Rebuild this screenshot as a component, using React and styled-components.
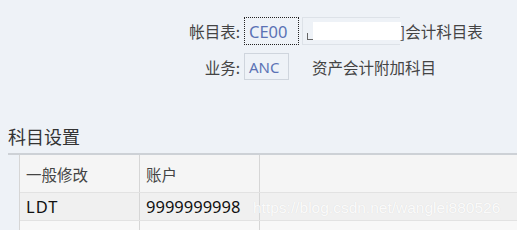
import React from "react";
import styled, { createGlobalStyle } from "styled-components";

const GlobalStyle = createGlobalStyle`
	html, body {
		margin: 0;
		padding: 0;
		background: #eef2f7;
		font-family: "Noto Sans", "Noto Sans CJK SC", sans-serif;
	}
`;

const Page = styled.div`
	position: relative;
	width: 517px;
	height: 230px;
	overflow: hidden;
	background: #eef2f7;
	color: #333;
`;

const Form = styled.div`
	display: grid;
	grid-template-columns: 64px auto;
	column-gap: 4px;
	row-gap: 8px;
	padding: 17px 0 0 176px;
	align-items: center;
`;

const Label = styled.div`
	text-align: right;
	font-size: 15.5px;
	color: #444;
	font-family: "Noto Sans CJK SC", sans-serif;
`;

const Line = styled.div`
	display: flex;
	align-items: center;
`;

const Field = styled.div`
	box-sizing: border-box;
	width: ${p => p.width}px;
	height: ${p => p.height}px;
	display: flex;
	align-items: center;
	padding-left: 4px;
	background: #eef2f7;
	border: ${p => (p.focused ? "1px dotted #222" : "1px solid #cfd5dd")};
	color: #5b72b5;
	font-size: ${p => p.size}px;
`;

const NameBox = styled.div`
	position: relative;
	box-sizing: border-box;
	width: 98px;
	height: 28px;
	margin-left: 3px;
	border: 1px solid #dde2e8;
	border-right: none;
	background: #eef2f7;

	&::before {
		content: "";
		position: absolute;
		left: 4px;
		top: 15px;
		width: 5px;
		height: 6px;
		border-left: 1px solid #666;
		border-bottom: 1px solid #666;
	}

	&::after {
		content: "";
		position: absolute;
		left: 0;
		top: 4px;
		width: 98px;
		height: 18px;
		background: #fff;
		clip-path: inset(0 0 0 10px);
	}
`;

const Desc = styled.span`
	font-size: 15.5px;
	color: #444;
	font-family: "Noto Sans CJK SC", sans-serif;
	margin-left: ${p => p.gap || 0}px;
`;

const Title = styled.div`
	margin: 44px 0 0 8px;
	height: 29px;
	font-size: 18px;
	color: #333;
	font-family: "Noto Sans CJK SC", sans-serif;
	line-height: 24px;
`;

const Section = styled.div`
	margin-left: 8px;
	border-top: 2px solid #cdd1d6;
	padding-left: 11px;
`;

const Table = styled.div`
	background: #f8f8f8;
	border-left: 1px solid #d6d6d6;
`;

const Row = styled.div`
	display: grid;
	grid-template-columns: 120px 120px 1fr;
	height: ${p => p.height}px;
	background: ${p => p.bg};
	border-bottom: 1px solid #e2e2e2;
`;

const Cell = styled.div`
	display: flex;
	align-items: center;
	padding-left: 6px;
	border-right: ${p => (p.last ? "none" : "1px solid #d6d6d6")};
	font-size: ${p => (p.head ? "15.5px" : "16.5px")};
	color: ${p => (p.head ? "#444" : "#111")};
	font-family: ${p =>
		p.head ? '"Noto Sans CJK SC", sans-serif' : '"Noto Sans", "Noto Sans CJK SC", sans-serif'};
	letter-spacing: ${p => (p.wide ? "1px" : "0")};
`;

const Watermark = styled.div`
	position: absolute;
	left: 253px;
	top: 199px;
	font-family: "Liberation Sans", sans-serif;
	font-size: 15.5px;
	color: rgba(255, 255, 255, 0.9);
	text-shadow: 0 0 1px rgba(0, 0, 0, 0.1);
`;

export default function App() {
	return (
		<Page>
			<GlobalStyle />
			<Form>
				<Label>帐目表:</Label>
				<Line>
					<Field width={55} height={28} size={16.5} focused>CE00</Field>
					<NameBox />
					<Desc>]会计科目表</Desc>
				</Line>
				<Label>业务:</Label>
				<Line>
					<Field width={45} height={27} size={15}>ANC</Field>
					<Desc gap={23}>资产会计附加科目</Desc>
				</Line>
			</Form>

			<Title>科目设置</Title>
			<Section>
				<Table>
					<Row height={37} bg="#f5f5f5">
						<Cell head>一般修改</Cell>
						<Cell head>账户</Cell>
						<Cell last />
					</Row>
					<Row height={27} bg="#f0f0f0">
						<Cell wide>LDT</Cell>
						<Cell>9999999998</Cell>
						<Cell last />
					</Row>
					<Row height={28} bg="#f8f8f8">
						<Cell />
						<Cell />
						<Cell last />
					</Row>
				</Table>
			</Section>
			<Watermark>https://blog.csdn.net/wanglei880526</Watermark>
		</Page>
	);
}
